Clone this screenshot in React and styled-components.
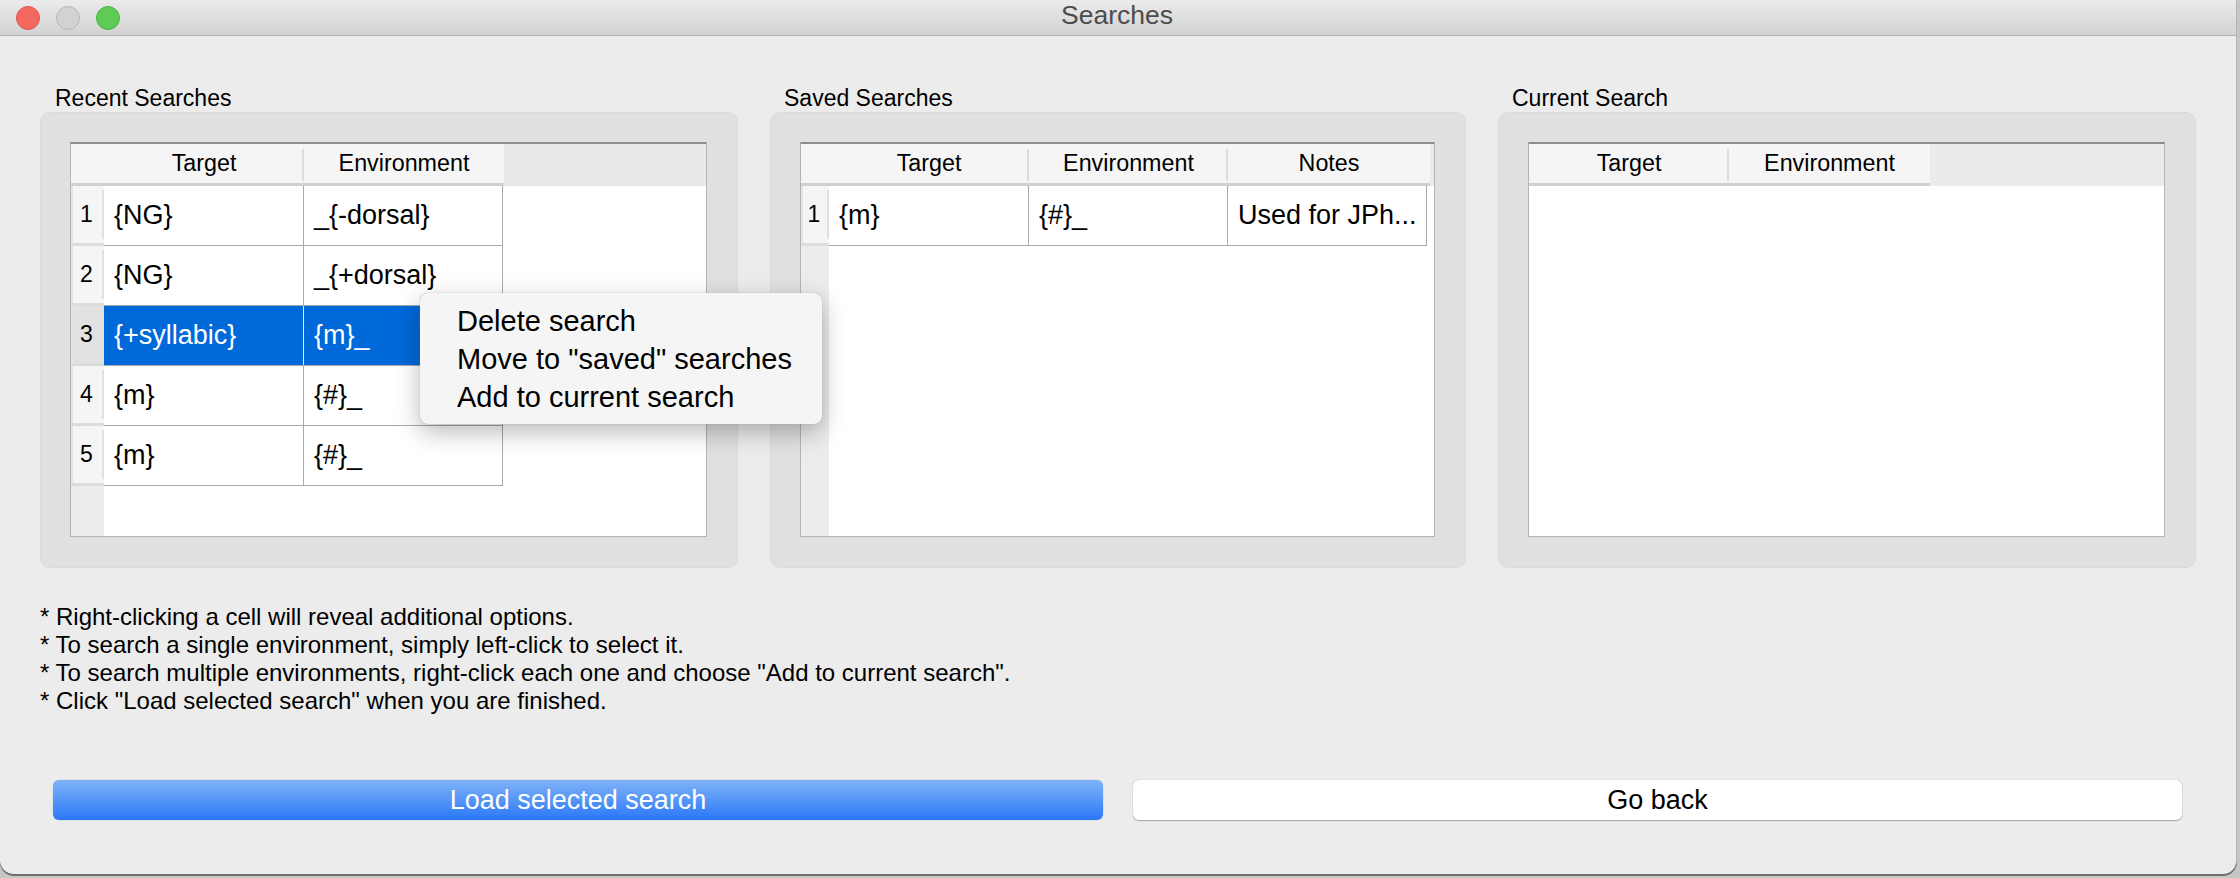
import React from 'react';
import styled, { createGlobalStyle } from 'styled-components';

const Global = createGlobalStyle`
  html, body { margin: 0; padding: 0; background: #c6c6c6; width: 2240px; height: 878px; overflow: hidden; }
  * { box-sizing: border-box; }
`;

const Win = styled.div`
  position: relative;
  width: 2237px;
  height: 874px;
  background: #ececec;
  border-radius: 0 0 14px 14px;
  border-right: 1px solid #b4b4b4;
  box-shadow: 0 2px 0 #6e6e6e;
  font-family: "Liberation Sans", Arial, sans-serif;
  color: #000;
  display: flex;
  flex-direction: column;
`;

const TitleBar = styled.header`
  flex: none;
  height: 36px;
  display: flex;
  align-items: center;
  padding-left: 16px;
  gap: 16px;
  position: relative;
  background: linear-gradient(#ebebeb, #d2d2d2);
  border-bottom: 1px solid #b1b1b1;
`;

const Light = styled.span`
  width: 24px;
  height: 24px;
  border-radius: 50%;
  background: ${(p) => p.$c};
  border: 1px solid ${(p) => p.$b};
`;

const Title = styled.div`
  position: absolute;
  left: 0;
  right: 2px;
  top: 0;
  height: 35px;
  line-height: 31px;
  text-align: center;
  font-size: 26.5px;
  color: #4c4c4c;
`;

const Columns = styled.main`
  flex: none;
  display: flex;
  padding: 48px 0 0 40px;
  gap: 32px;
`;

const Section = styled.section`
  flex: none;
  width: ${(p) => p.$w}px;
`;

const Label = styled.h2`
  margin: 0 0 0 ${(p) => p.$x}px;
  height: 28px;
  font-weight: 400;
  font-size: 23px;
  line-height: 28px;
`;

const Group = styled.div`
  height: 456px;
  padding: 29px 30px 0 29px;
  background: #e0e0e0;
  border: 1px solid #dadada;
  border-radius: 10px;
`;

const TableBox = styled.div`
  position: relative;
  height: 395px;
  background: #fff;
  border: 1px solid #b4b4b4;
  border-top: 2px solid #8e8e8e;
  display: flex;
  flex-direction: column;
`;

const HeaderRow = styled.div`
  flex: none;
  height: 42px;
  display: flex;
  background: ${(p) => p.$bg};
`;

const HeaderCell = styled.div`
  flex: none;
  width: ${(p) => p.$w + p.$lead}px;
  height: 42px;
  background: #f5f5f5;
  border-bottom: 3px solid #d0d0d0;
  display: flex;
  align-items: center;
  justify-content: center;
  padding-left: ${(p) => p.$lead}px;
  padding-bottom: 1px;
  font-size: 23.3px;
  position: relative;
  &:not(:last-child)::after {
    content: '';
    position: absolute;
    right: 0;
    top: 5px;
    height: 32px;
    width: 2px;
    background: #dcdcdc;
  }
`;

const Body = styled.div`
  flex: 1;
  display: flex;
  min-height: 0;
`;

const Gutter = styled.div`
  flex: none;
  width: ${(p) => p.$w}px;
  background: #ececec;
`;

const RowNum = styled.div`
  position: relative;
  height: 60px;
  display: flex;
  align-items: center;
  justify-content: center;
  padding: 0 4px 1px 0;
  font-size: 23px;
  background: ${(p) => (p.$on ? '#e2e2e2' : '#f5f5f5')};
  border-bottom: 3px solid #dcdcdc;
  border-left: 2px solid #e4e4e4;
  &::after {
    content: '';
    position: absolute;
    right: 0;
    top: 4px;
    bottom: 4px;
    width: 2px;
    background: #e0e0e0;
  }
`;

const Rows = styled.div`
  flex: none;
  display: flex;
  flex-direction: column;
`;

const Row = styled.div`
  height: 60px;
  display: flex;
  background: ${(p) => (p.$on ? '#0069d9' : '#fff')};
  color: ${(p) => (p.$on ? '#fff' : '#000')};
  border-bottom: 1px solid #a9a9a9;
`;

const Cell = styled.div`
  width: ${(p) => p.$w}px;
  padding: 0 0 1px 10px;
  display: flex;
  align-items: center;
  font-size: 27px;
  white-space: nowrap;
  border-right: 1px solid ${(p) => (p.$on ? '#e4eefa' : '#a9a9a9')};
`;

const Notes = styled.div`
  padding: 35px 0 0 40px;
  font-size: 24px;
  line-height: 28px;
`;

const Buttons = styled.div`
  display: flex;
  padding: 65px 0 0 53px;
  gap: 30px;
`;

const Button = styled.div`
  flex: none;
  width: ${(p) => p.$w}px;
  height: 40px;
  display: flex;
  align-items: center;
  justify-content: center;
  font-size: 27px;
  border-radius: 6px;
  background: ${(p) => (p.$primary ? 'linear-gradient(#7fb3f7, #2a77f7)' : '#fff')};
  color: ${(p) => (p.$primary ? '#fff' : '#000')};
  box-shadow: ${(p) => (p.$primary ? '0 0 1px #5a8fd8' : '0 0 1px #9a9a9a, 0 1px 1px #a5a5a5')};
`;

const Menu = styled.div`
  position: absolute;
  left: 420px;
  top: 293px;
  width: 402px;
  height: 131px;
  padding: 9px 0 0 37px;
  background: #f5f5f5;
  border-radius: 8px;
  box-shadow: 0 0 1px #8a8a8a, 0 8px 24px rgba(0, 0, 0, 0.28);
  font-size: 29px;
  line-height: 38px;
  white-space: nowrap;
`;

const recent = [
  ['{NG}', '_{-dorsal}'],
  ['{NG}', '_{+dorsal}'],
  ['{+syllabic}', '{m}_'],
  ['{m}', '{#}_'],
  ['{m}', '{#}_'],
];

function Table({ columns, rows, headWidths, widths, gutter, headBg, selected }) {
  return (
    <TableBox>
      <HeaderRow $bg={headBg}>
        {columns.map((c, i) => (
          <HeaderCell key={c} $w={headWidths[i]} $lead={i === 0 ? gutter : 0}>{c}</HeaderCell>
        ))}
      </HeaderRow>
      <Body>
        {gutter > 0 && (
          <Gutter $w={gutter}>
            {rows.map((r, i) => (
              <RowNum key={i} $on={i === selected}>{i + 1}</RowNum>
            ))}
          </Gutter>
        )}
        <Rows>
          {rows.map((r, i) => (
            <Row key={i} $on={i === selected}>
              {r.map((t, j) => (
                <Cell key={j} $w={widths[j]} $on={i === selected}>{t}</Cell>
              ))}
            </Row>
          ))}
        </Rows>
      </Body>
    </TableBox>
  );
}

export default function App() {
  return (
    <>
      <Global />
      <Win>
        <TitleBar>
          <Light $c="#f4675f" $b="#de544c" />
          <Light $c="#d2d2d2" $b="#b6b6b6" />
          <Light $c="#5fca55" $b="#4cb344" />
          <Title>Searches</Title>
        </TitleBar>
        <Columns>
          <Section $w={698}>
            <Label $x={15}>Recent Searches</Label>
            <Group>
              <Table columns={['Target', 'Environment']} headWidths={[200, 200]} widths={[200, 199]} gutter={33} rows={recent} headBg="#e8e8e8" selected={2} />
            </Group>
          </Section>
          <Section $w={696}>
            <Label $x={14}>Saved Searches</Label>
            <Group>
              <Table columns={['Target', 'Environment', 'Notes']} headWidths={[200, 199, 202]} widths={[200, 199, 199]} gutter={28} rows={[['{m}', '{#}_', 'Used for JPh...']]} headBg="#ebebeb" />
            </Group>
          </Section>
          <Section $w={698}>
            <Label $x={14}>Current Search</Label>
            <Group>
              <Table columns={['Target', 'Environment']} headWidths={[200, 201]} widths={[200, 200]} gutter={0} rows={[]} headBg="#ebebeb" />
            </Group>
          </Section>
        </Columns>
        <Notes>
          <div>* Right-clicking a cell will reveal additional options.</div>
          <div>* To search a single environment, simply left-click to select it.</div>
          <div>* To search multiple environments, right-click each one and choose "Add to current search".</div>
          <div>* Click "Load selected search" when you are finished.</div>
        </Notes>
        <Buttons>
          <Button $primary $w={1050}>Load selected search</Button>
          <Button $w={1049}>Go back</Button>
        </Buttons>
        <Menu>
          <div>Delete search</div>
          <div>Move to "saved" searches</div>
          <div>Add to current search</div>
        </Menu>
      </Win>
    </>
  );
}
